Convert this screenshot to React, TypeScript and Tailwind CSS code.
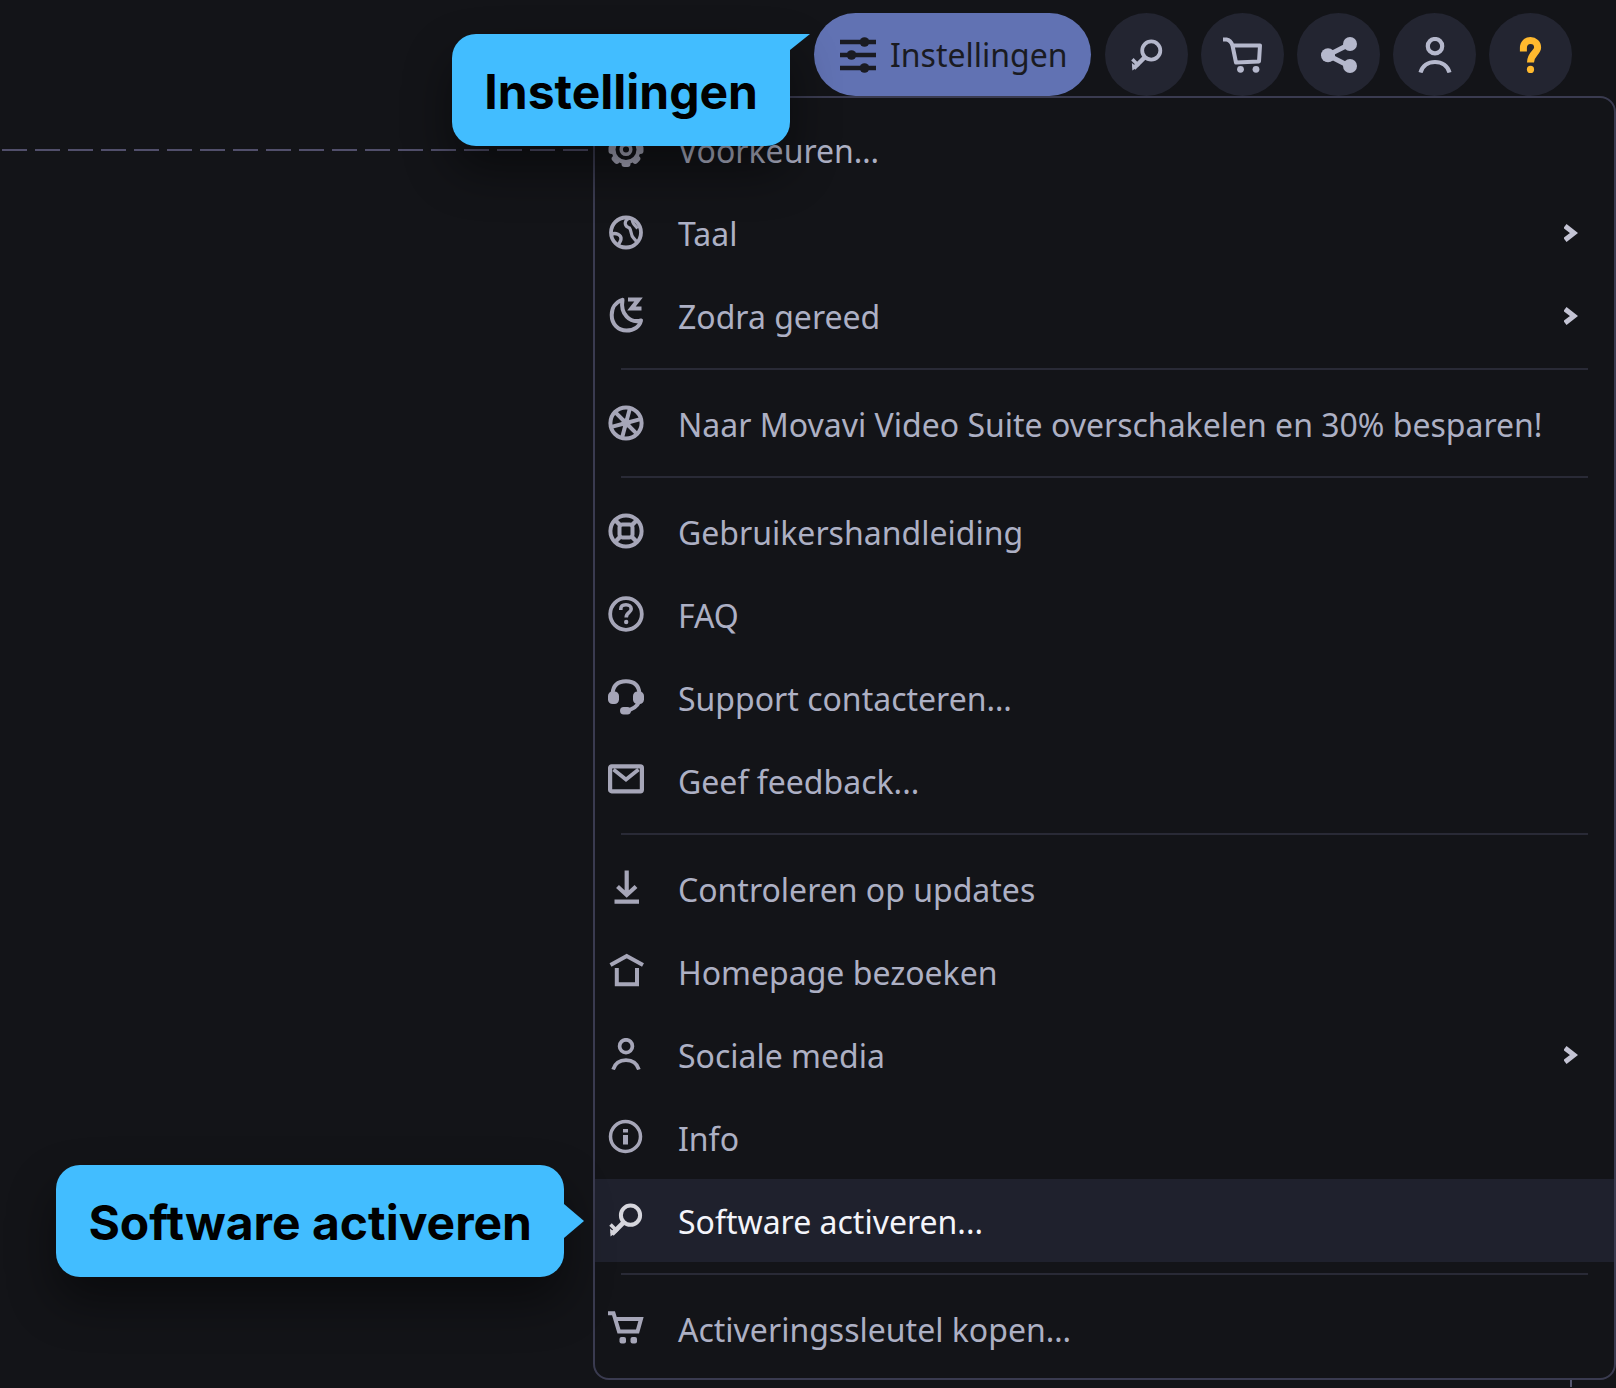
import type { ReactNode } from "react";

type IconProps = { className?: string };

function Svg({ className = "size-9", box = "0 0 36 36", width = 4, children }: { className?: string; box?: string; width?: number; children: ReactNode }) {
  return (
    <svg className={className} viewBox={box} fill="none" stroke="currentColor" strokeWidth={width} aria-hidden="true">
      {children}
    </svg>
  );
}

const SlidersIcon = () => (
  <Svg width={4.4}>
    <path d="M0 5H36M0 18H36M0 31H36" />
    <g fill="currentColor" stroke="none">
      <circle cx="24.5" cy="5" r="4.8" />
      <circle cx="11.5" cy="18" r="4.8" />
      <circle cx="24.5" cy="31" r="4.8" />
    </g>
  </Svg>
);

const KeyIcon = ({ className }: IconProps) => (
  <Svg className={className}>
    <circle cx="22.5" cy="13.2" r="9.6" />
    <path d="M16 20L4 32" strokeWidth="4.6" />
    <path d="M9.5 29.500L2.500 22.500" strokeWidth="3.600" />
    <path d="M2 26.500L7.500 31L2.500 34.500Z" fill="currentColor" stroke="none" />
  </Svg>
);

const CartWideIcon = () => (
  <Svg className="h-9 w-10" box="0 0 40 36">
    <path d="M-1 2.500H3.500C7 3 8.500 5.500 9.500 8.500L13 25.500L36 24.500L37 8.500H9.500" strokeLinejoin="round" />
    <g fill="currentColor" stroke="none">
      <circle cx="17.500" cy="32.300" r="3.400" />
      <circle cx="33" cy="32.300" r="3.400" />
    </g>
  </Svg>
);

const CartIcon = () => (
  <Svg>
    <path d="M0 3.2H5.5L11 21.5H29.5L33 9H7.5" />
    <g fill="currentColor" stroke="none">
      <rect x="11.5" y="27" width="6.5" height="6.5" rx="2" />
      <rect x="22.5" y="27" width="6.5" height="6.5" rx="2" />
    </g>
  </Svg>
);

const ShareIcon = () => (
  <Svg width={4.8}>
    <path d="M29 7L7 18.2L29 29.5" />
    <g fill="currentColor" stroke="none">
      <circle cx="7" cy="18.2" r="7" />
      <circle cx="29" cy="7" r="7" />
      <circle cx="29" cy="29" r="7" />
    </g>
  </Svg>
);

const UserIcon = ({ className }: IconProps) => (
  <Svg className={className} width={4.2}>
    <circle cx="18" cy="9.2" r="7.2" />
    <path d="M3.5 35.5C5.5 29 11 25 18 25S30.5 29 32.5 35.5" />
  </Svg>
);

const QuestionIcon = () => (
  <Svg width={7}>
    <path d="M10.4 14.5V11C10.4 6 13.500 3.600 17.500 3.600S24.600 6.500 24.600 10.500C24.600 16 17.500 16.500 17.500 25.500" />
    <circle cx="17.500" cy="32.400" r="3.600" fill="currentColor" stroke="none" />
  </Svg>
);

const GearIcon = () => (
  <Svg width={4}>
    <circle cx="18" cy="18.500" r="12.500" />
    <g fill="currentColor" stroke="none">
      {[0, 45, 90, 135, 180, 225, 270, 315].map((angle) => (
        <rect key={angle} x="13.500" y="1" width="9" height="6" rx="3" transform={`rotate(${angle} 18 18.500)`} />
      ))}
    </g>
    <circle cx="18" cy="18.500" r="4.800" strokeWidth="3.500" />
  </Svg>
);

const GlobeIcon = () => (
  <Svg width={3.8}>
    <circle cx="18" cy="18.500" r="15" />
    <path d="M20.500 4.500C15.500 7.500 16.500 12.500 21.500 14C24 17.500 22.500 21.500 25.500 24L28.500 27.500M24.500 5.500C23.500 9.500 27.500 11.500 29.500 14.500" strokeWidth="3.200" />
    <path d="M3.500 20.500C7.500 18 13.500 21 13 25C13 27.500 11 28 10.500 31.500" strokeWidth="3.400" />
  </Svg>
);

const MoonIcon = () => (
  <Svg width={4}>
    <path d="M14.500 2.800C7.500 5 3.700 11 3.700 18C3.700 27 10 33.500 18.500 33.500C26 33.500 31.500 29.500 33 23.500C22 26.500 12 17 14.500 2.800Z" strokeLinejoin="round" />
    <path d="M20 2.500H30.500L23.500 11.500H33.500" strokeWidth="4.200" />
  </Svg>
);

const ApertureIcon = () => (
  <Svg width={4}>
    <circle cx="18" cy="18" r="15.600" />
    {[-75, -15, 45, 105, 165, 225].map((angle) => (
      <path key={angle} d="M18 18L33 18" transform={`rotate(${angle} 18 18)`} />
    ))}
    <circle cx="18" cy="18" r="4.500" fill="currentColor" stroke="none" />
  </Svg>
);

const LifebuoyIcon = () => (
  <Svg width={4}>
    <circle cx="18" cy="18" r="15.600" />
    <rect x="11.500" y="11.500" width="13" height="13" rx="3" />
    <path d="M7 7L12 12M29 7L24 12M7 29L12 24M29 29L24 24" strokeWidth="4.400" />
  </Svg>
);

const FaqIcon = () => (
  <Svg width={3.800}>
    <circle cx="18" cy="18" r="15.800" />
    <path d="M12.800 14V13C12.800 10 15 8.800 18 8.800S23.200 10.500 23.200 13C23.200 16.500 18.200 16.500 18.200 21.500" strokeWidth="3.600" />
    <circle cx="18.200" cy="26" r="2.200" fill="currentColor" stroke="none" />
  </Svg>
);

const HeadsetIcon = () => (
  <Svg>
    <path d="M4.500 15C5 6.500 10 2.300 18 2.300S31 6.500 31.500 15" />
    <path d="M31.500 22C29 28 25 31 17 31.800" />
    <g fill="currentColor" stroke="none">
      <rect x="0" y="12.500" width="11" height="12.500" rx="4.500" />
      <rect x="25" y="12.500" width="11" height="12.500" rx="4.500" />
      <rect x="12" y="28" width="11" height="7.500" rx="3.700" />
    </g>
  </Svg>
);

const MailIcon = () => (
  <Svg width={4.200}>
    <rect x="2.100" y="4.300" width="31.800" height="25" rx="1.500" />
    <path d="M5.500 7.500L18 17.500L30.500 7.500" strokeWidth="3.800" />
  </Svg>
);

const DownloadIcon = () => (
  <Svg width={4.200}>
    <path d="M18.700 0.500V25M9.500 16.500L18.700 25L28 16.500M6.500 31.700H31" />
  </Svg>
);

const HomeIcon = () => (
  <Svg>
    <path d="M2.500 12L18.700 3L35 12M8.800 15V31.200H29V15" />
  </Svg>
);

const InfoIcon = () => (
  <Svg width={3.500}>
    <circle cx="17.500" cy="17.500" r="15" />
    <path d="M17.500 16V25.500M17.500 10V13.500" strokeWidth="5" />
  </Svg>
);

const Chevron = () => (
  <svg className="mb-0.5 ml-auto h-[18px] w-3.5 shrink-0 text-[#c4c4d4]" viewBox="0 0 14 18" fill="none" stroke="currentColor" strokeWidth="5" aria-hidden="true">
    <path d="M1 2L10 9L1 16" />
  </svg>
);

type Entry = { label: string; icon: ReactNode; submenu?: boolean; active?: boolean };

const groups: Entry[][] = [
  [
    { label: "Voorkeuren…", icon: <GearIcon /> },
    { label: "Taal", icon: <GlobeIcon />, submenu: true },
    { label: "Zodra gereed", icon: <MoonIcon />, submenu: true },
  ],
  [{ label: "Naar Movavi Video Suite overschakelen en 30% besparen!", icon: <ApertureIcon /> }],
  [
    { label: "Gebruikershandleiding", icon: <LifebuoyIcon /> },
    { label: "FAQ", icon: <FaqIcon /> },
    { label: "Support contacteren…", icon: <HeadsetIcon /> },
    { label: "Geef feedback...", icon: <MailIcon /> },
  ],
  [
    { label: "Controleren op updates", icon: <DownloadIcon /> },
    { label: "Homepage bezoeken", icon: <HomeIcon /> },
    { label: "Sociale media", icon: <UserIcon className="size-8" />, submenu: true },
    { label: "Info", icon: <InfoIcon /> },
    { label: "Software activeren...", icon: <KeyIcon />, active: true },
  ],
  [{ label: "Activeringssleutel kopen…", icon: <CartIcon /> }],
];

const tools = [
  { label: "Activeren", icon: <KeyIcon className="size-[34px]" /> },
  { label: "Winkelwagen", icon: <CartWideIcon /> },
  { label: "Delen", icon: <ShareIcon /> },
  { label: "Account", icon: <UserIcon /> },
];

const bubble =
  "absolute right-full z-20 flex h-28 items-center whitespace-nowrap bg-[#42bdff] px-8 pt-1 font-['Inter',sans-serif] text-[48px] font-bold leading-none text-black shadow-[0_24px_48px_0_rgba(0,0,0,0.45)]";

export default function App() {
  return (
    <div className="flex min-h-screen flex-col overflow-hidden bg-[#131418] font-['Noto_Sans',sans-serif] text-[32px] leading-10 text-[#adb0c4]">
      <header className="flex justify-end gap-[13px] pr-11 pt-[13px]">
        <div className="relative mr-px">
          <button type="button" className="flex h-[83px] w-[277px] items-center gap-3.5 whitespace-nowrap rounded-full bg-[#6172b3] pl-[26px] text-[#1a1b22]">
            <SlidersIcon />
            Instellingen
          </button>
          <div className={`${bubble} top-[21px] mr-6 rounded-3xl rounded-tr-none`}>
            Instellingen
            <svg className="absolute left-full top-0 h-4 w-5" viewBox="0 0 20 16" aria-hidden="true">
              <path d="M0 0H20L0 16Z" fill="#42bdff" />
            </svg>
          </div>
        </div>
        {tools.map((tool) => (
          <button key={tool.label} type="button" aria-label={tool.label} className="flex size-[83px] items-center justify-center rounded-full bg-[#232531] text-[#b5b8cc]">
            {tool.icon}
          </button>
        ))}
        <button type="button" aria-label="Help" className="flex size-[83px] items-center justify-center rounded-full bg-[#232531] text-[#ffb92e]">
          <QuestionIcon />
        </button>
      </header>

      <main className="flex">
        <div className="w-[593px] shrink-0 pl-0.5 pt-[53px]">
          <div className="h-0.5 w-[587px] bg-[repeating-linear-gradient(90deg,#514f6b_0px,#514f6b_25px,transparent_25px,transparent_33px)]" />
        </div>
        <nav aria-label="Instellingen" className="min-w-0 flex-1 rounded-2xl border-2 border-[#3a3b50] pb-2 pt-2.5">
          {groups.map((group, index) => (
            <div key={group[0].label}>
              {index > 0 && (
                <div className="flex h-[25px] items-center px-[26px] pb-0.5">
                  <hr className="h-0.5 flex-1 border-0 bg-[#292a36]" />
                </div>
              )}
              <ul>
                {group.map((entry) => (
                  <li key={entry.label} className="relative">
                    <button
                      type="button"
                      className={
                        entry.active
                          ? "flex h-[83px] w-full items-center whitespace-nowrap bg-[#1f212d] pl-[13px] pr-9 pt-0.5 text-left text-[#f3f4fa]"
                          : "flex h-[83px] w-full items-center whitespace-nowrap pl-[13px] pr-9 pt-0.5 text-left"
                      }
                    >
                      <span className={entry.active ? "mb-1 mr-[34px] flex size-9 items-center justify-center text-[#d6d6dd]" : "mb-1 mr-[34px] flex size-9 items-center justify-center text-[#a6a6b8]"}>
                        {entry.icon}
                      </span>
                      {entry.label}
                      {entry.submenu && <Chevron />}
                    </button>
                    {entry.active && (
                      <div className={`${bubble} top-1/2 mr-[31px] -translate-y-1/2 rounded-3xl`}>
                        Software activeren
                        <svg className="absolute left-full top-[39px] h-[34px] w-5" viewBox="0 0 20 34" aria-hidden="true">
                          <path d="M0 0L20 17L0 34Z" fill="#42bdff" />
                        </svg>
                      </div>
                    )}
                  </li>
                ))}
              </ul>
            </div>
          ))}
        </nav>
      </main>

      <footer className="flex justify-end pr-11">
        <div className="h-[7px] w-0.5 bg-[#55566e]" />
      </footer>
    </div>
  );
}
